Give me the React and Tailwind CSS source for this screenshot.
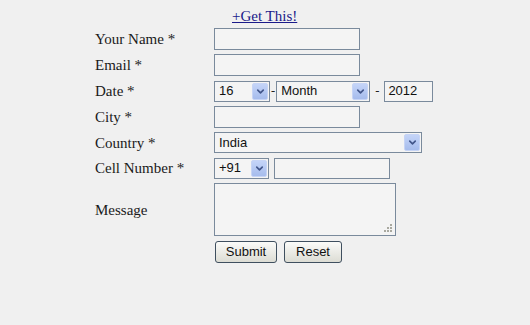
import { ChevronDown } from 'lucide-react'

// XP-ish form: serif labels on the left, boxy controls on the right.
const serif = { fontFamily: '"Liberation Serif", "Times New Roman", serif' }

function Box({ w, h = 22, children, className = '' }) {
  return (
    <div
      className={`border border-[#7a8a9c] bg-[#f4f4f4] flex items-center text-[13px] text-[#111] ${className}`}
      style={{ width: w, height: h, fontFamily: '"Liberation Sans", Arial, sans-serif' }}
    >
      {children}
    </div>
  )
}

function DropButton() {
  return (
    <div className="ml-auto mr-[1px] w-[16px] h-[17px] rounded-[2px] border border-[#c6d4f5] bg-gradient-to-b from-[#c4d4f8] to-[#a6bcec] flex items-center justify-center">
      <ChevronDown size={11} strokeWidth={3.5} className="text-[#42568a]" />
    </div>
  )
}

function Select({ w, value, h = 21 }) {
  return (
    <Box w={w} h={h}>
      <span className="pl-[4px]">{value}</span>
      <DropButton />
    </Box>
  )
}

function Label({ children }) {
  return (
    <div className="text-[15px] text-[#1a1a1a] leading-[18px]" style={serif}>
      {children}
    </div>
  )
}

function Button({ children, w }) {
  return (
    <button
      className="h-[22px] rounded-[3px] border border-[#3f4f5f] bg-gradient-to-b from-[#fbfbf9] to-[#dcdcd4] text-[13px] text-[#111] flex items-center justify-center"
      style={{ width: w, fontFamily: '"Liberation Sans", Arial, sans-serif' }}
    >
      {children}
    </button>
  )
}

export default function App() {
  return (
    <div className="w-[530px] h-[325px] bg-[#f0f0f0] overflow-hidden">
      <div className="h-[28px] pl-[232px] pt-[3px]">
        <a href="#" className="text-[15px] leading-[20px] text-[#1a1a8a] underline" style={serif}>
          +Get This!
        </a>
      </div>

      <div className="ml-[95px] grid grid-cols-[119px_auto] gap-y-[4px] items-center">
        <Label>Your Name *</Label>
        <Box w={146} />

        <Label>Email *</Label>
        <Box w={146} />

        <Label>Date *</Label>
        <div className="flex items-center h-[22px] text-[13px]">
          <Select w={56} value="16" />
          <span className="px-[1px] text-[#222]">-</span>
          <Select w={94} value="Month" />
          <span className="px-[5px] text-[#222]">-</span>
          <Box w={49} h={21}>
            <span className="pl-[3px]">2012</span>
          </Box>
        </div>

        <Label>City *</Label>
        <Box w={146} />

        <Label>Country *</Label>
        <Select w={208} value="India" />

        <Label>Cell Number *</Label>
        <div className="flex items-center gap-[5px] h-[22px]">
          <Select w={55} value="+91" />
          <Box w={116} h={21} />
        </div>

        <Label>Message</Label>
        <div className="relative w-[182px] h-[53px] border border-[#7a8a9c] bg-[#f4f4f4]">
          <svg className="absolute right-[2px] bottom-[2px]" width="10" height="10" viewBox="0 0 10 10">
            <rect x="7" y="1" width="2" height="2" fill="#a9a9a0" />
            <rect x="4" y="4" width="2" height="2" fill="#a9a9a0" />
            <rect x="7" y="4" width="2" height="2" fill="#a9a9a0" />
            <rect x="1" y="7" width="2" height="2" fill="#a9a9a0" />
            <rect x="4" y="7" width="2" height="2" fill="#a9a9a0" />
            <rect x="7" y="7" width="2" height="2" fill="#a9a9a0" />
          </svg>
        </div>

        <div />
        <div className="flex gap-[7px] mt-[1px] pl-[1px]">
          <Button w={62}>Submit</Button>
          <Button w={58}>Reset</Button>
        </div>
      </div>
    </div>
  )
}
